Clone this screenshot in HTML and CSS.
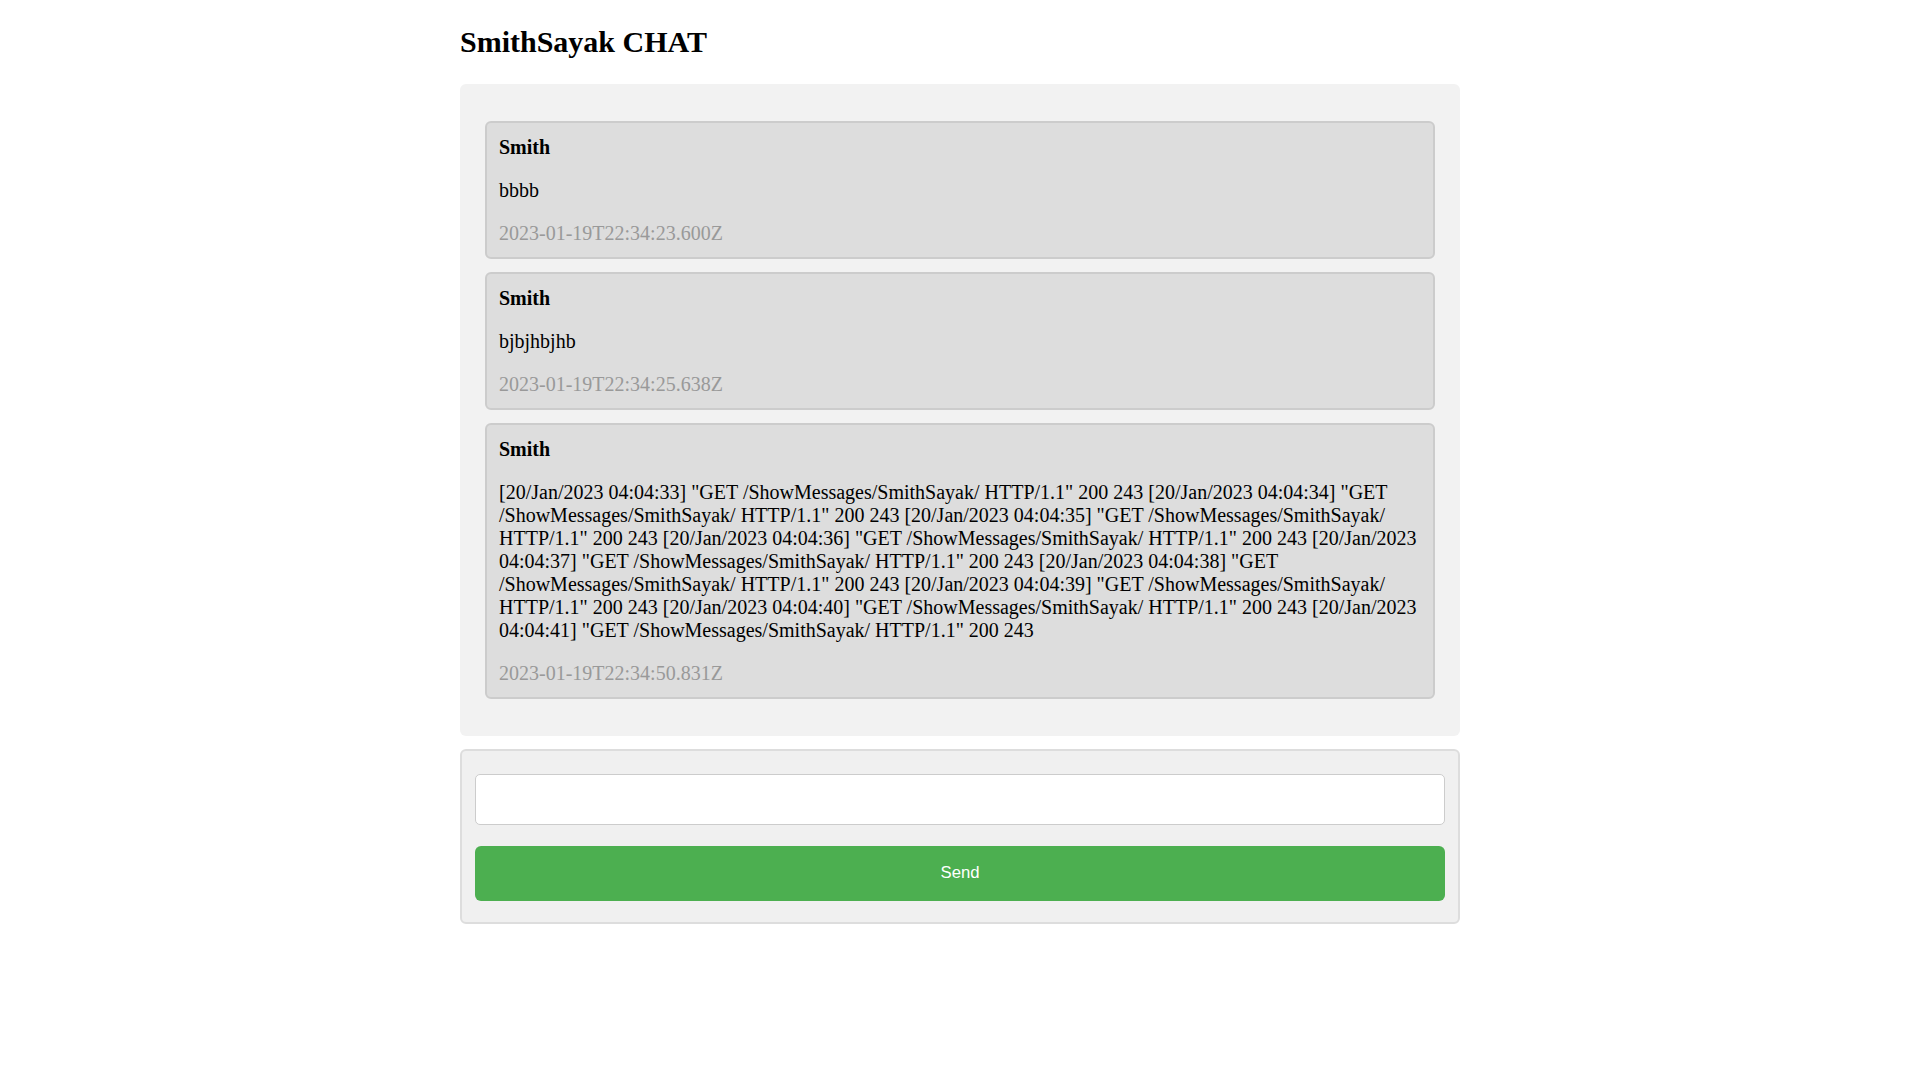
FILE: index.html
```html
<!DOCTYPE html>
<html lang="en">
<head>
<meta charset="utf-8">
<title>SmithSayak CHAT</title>
<link rel="stylesheet" href="styles.css">
</head>
<body>
<div class="wrap">
  <h1 class="title">SmithSayak CHAT</h1>
  <div class="chat">
    <div class="message">
      <p class="name">Smith</p>
      <p class="text">bbbb</p>
      <p class="time">2023-01-19T22:34:23.600Z</p>
    </div>
    <div class="message">
      <p class="name">Smith</p>
      <p class="text">bjbjhbjhb</p>
      <p class="time">2023-01-19T22:34:25.638Z</p>
    </div>
    <div class="message">
      <p class="name">Smith</p>
      <p class="text">[20/Jan/2023 04:04:33] "GET /ShowMessages/SmithSayak/ HTTP/1.1" 200 243 [20/Jan/2023 04:04:34] "GET /ShowMessages/SmithSayak/ HTTP/1.1" 200 243 [20/Jan/2023 04:04:35] "GET /ShowMessages/SmithSayak/ HTTP/1.1" 200 243 [20/Jan/2023 04:04:36] "GET /ShowMessages/SmithSayak/ HTTP/1.1" 200 243 [20/Jan/2023 04:04:37] "GET /ShowMessages/SmithSayak/ HTTP/1.1" 200 243 [20/Jan/2023 04:04:38] "GET /ShowMessages/SmithSayak/ HTTP/1.1" 200 243 [20/Jan/2023 04:04:39] "GET /ShowMessages/SmithSayak/ HTTP/1.1" 200 243 [20/Jan/2023 04:04:40] "GET /ShowMessages/SmithSayak/ HTTP/1.1" 200 243 [20/Jan/2023 04:04:41] "GET /ShowMessages/SmithSayak/ HTTP/1.1" 200 243</p>
      <p class="time">2023-01-19T22:34:50.831Z</p>
    </div>
  </div>
  <form class="form">
    <input class="input" type="text">
    <button class="send" type="button">Send</button>
  </form>
</div>
</body>
</html>
```
FILE: styles.css
```css
html, body {
  margin: 0;
  padding: 0;
  background: #ffffff;
}

body {
  font-family: "Liberation Serif", "Times New Roman", serif;
  font-size: 20px;
  color: #000;
}

.wrap {
  width: 1000px;
  margin: 0 auto;
}

.title {
  font-size: 30px;
  font-weight: bold;
  margin: 25px 0 25px;
}

.chat {
  background: #f2f2f2;
  border-radius: 6px;
  padding: 37px 25px 37px;
  display: flex;
  flex-direction: column;
  gap: 13px;
}

.message {
  background: #dddddd;
  border: 2px solid #cccccc;
  border-radius: 6px;
  padding: 13px 12px 12px;
}

.message p {
  margin: 0;
}

.message .name {
  font-weight: bold;
}

.message .text,
.message .time {
  margin-top: 20px;
}

.message .time {
  color: #999999;
}

.form {
  margin: 13px 0 0;
  background: #f0f0f0;
  border: 2px solid #dddddd;
  border-radius: 6px;
  padding: 23px 13px 21px;
  display: flex;
  flex-direction: column;
  gap: 21px;
}

.input {
  display: block;
  box-sizing: border-box;
  width: 100%;
  height: 51px;
  margin: 0;
  border: 1.5px solid #cccccc;
  border-radius: 5px;
  background: #ffffff;
  padding: 0 12px;
  font-size: 20px;
}

.send {
  display: block;
  box-sizing: border-box;
  width: 100%;
  height: 55px;
  margin: 0;
  padding: 0 0 2px;
  border: none;
  border-radius: 6px;
  background: #4caf50;
  color: #ffffff;
  font-family: "Liberation Sans", Arial, sans-serif;
  font-size: 16.7px;
}
```
